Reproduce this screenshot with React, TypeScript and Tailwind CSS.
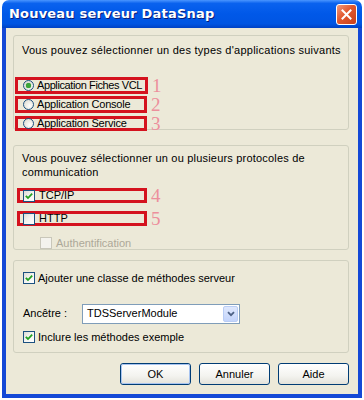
import React from "react";

function Radio({ checked }: { checked?: boolean }) {
  return (
    <span className="w-[11px] h-[11px] shrink-0 rounded-full border border-[#1c5180] bg-[radial-gradient(circle_at_65%_65%,#ffffff_0%,#f0efe8_40%,#d6d5cc_100%)] flex items-center justify-center">
      {checked && <span className="w-[5px] h-[5px] rounded-full bg-[#3aa63a] shadow-[0_0_1px_#1f7f1f]" />}
    </span>
  );
}

function Check({ checked, disabled }: { checked?: boolean; disabled?: boolean }) {
  return (
    <span
      className={
        disabled
          ? "w-[12px] h-[12px] shrink-0 border border-[#c9c7ba] bg-[#f4f3ee] flex items-center justify-center"
          : "w-[12px] h-[12px] shrink-0 border border-[#1c5180] bg-[linear-gradient(135deg,#dcdcd7_0%,#f4f4f1_50%,#ffffff_100%)] flex items-center justify-center"
      }
    >
      {checked && (
        <svg width="8" height="8" viewBox="0 0 8 8">
          <path d="M0.8 3.8 L3 6 L7.2 1.6" stroke="#21a121" strokeWidth="1.8" fill="none" />
        </svg>
      )}
    </span>
  );
}

function Num({ n }: { n: string }) {
  return (
    <span className="ml-[4px] text-[19px] leading-[17px] text-[#ec8f9c] font-['Liberation_Serif',serif]">{n}</span>
  );
}

function Button({ label, def }: { label: string; def?: boolean }) {
  return (
    <div className="w-[71px] h-[22px] rounded-[3px] border border-[#003c74] bg-[linear-gradient(to_bottom,#ffffff_0%,#f3f3ef_60%,#e3e2da_100%)] flex items-center justify-center">
      <div
        className={
          def
            ? "w-full h-full rounded-[2px] border border-[#a8c4f0] flex items-center justify-center"
            : "w-full h-full rounded-[2px] flex items-center justify-center"
        }
      >
        {label}
      </div>
    </div>
  );
}

export default function App() {
  return (
    <div className="w-[364px] h-[400px] bg-white font-['Liberation_Sans',Arial,sans-serif] text-[11px] text-black whitespace-nowrap">
      <div className="ml-[2px] w-[360px] flex flex-col">
        <div className="h-[28px] rounded-t-[7px] bg-[linear-gradient(to_bottom,#4a95ff_0%,#0a62ee_12%,#0058e8_50%,#0055e2_85%,#0042c4_100%)] flex items-center justify-between pl-[7px] pr-[5px]">
          <span className="text-white font-bold text-[13px] tracking-[0.2px] font-['DejaVu_Sans',sans-serif] [text-shadow:1px_1px_0_#0a1e7a]">
            Nouveau serveur DataSnap
          </span>
          <div className="w-[21px] h-[21px] rounded-[3px] border border-white bg-[linear-gradient(135deg,#f09a7e_0%,#e2582e_45%,#c8401a_100%)] flex items-center justify-center">
            <svg width="11" height="11" viewBox="0 0 11 11">
              <path d="M1.5 1.5 L9.5 9.5 M9.5 1.5 L1.5 9.5" stroke="white" strokeWidth="2" strokeLinecap="square" />
            </svg>
          </div>
        </div>
        <div className="h-[370px] border-x-[4px] border-b-[4px] border-[#1448d6] bg-[#ece9d8] pl-[7px] pr-[9px] flex flex-col">
          {/* Group 1 */}
          <div className="mt-[7px] h-[95px] rounded-[3px] border border-[#d0d0bf] flex flex-col">
            <div className="pl-[8px] pt-[8px] leading-[13px] tracking-[0.25px]">Vous pouvez sélectionner un des types d'applications suivants</div>
            <div className="mt-[20px] ml-[1px] flex flex-col gap-[2px] leading-[11px] tracking-[-0.2px]">
              <div className="flex items-center">
                <div className="w-[133px] h-[17px] border-[3px] border-[#d4121e] flex items-center pl-[5px] gap-[3px]">
                  <Radio checked />
                  <span className="tracking-[-0.4px]">Application Fiches VCL</span>
                </div>
                <Num n="1" />
              </div>
              <div className="flex items-center">
                <div className="w-[132px] h-[17px] border-[3px] border-[#d4121e] flex items-center pl-[5px] gap-[3px]">
                  <Radio />
                  <span>Application Console</span>
                </div>
                <Num n="2" />
              </div>
              <div className="flex items-center">
                <div className="w-[132px] h-[15px] border-[3px] border-[#d4121e] flex items-center pl-[5px] gap-[3px]">
                  <Radio />
                  <span>Application Service</span>
                </div>
                <Num n="3" />
              </div>
            </div>
          </div>
          {/* Group 2 */}
          <div className="mt-[15px] h-[105px] rounded-[3px] border border-[#d0d0bf] flex flex-col">
            <div className="pl-[8px] pt-[5px] leading-[14px] tracking-[0.2px]">
              Vous pouvez sélectionner un ou plusieurs protocoles de
              <br />
              communication
            </div>
            <div className="mt-[8px] ml-[3px] flex flex-col gap-[6px] leading-[11px]">
              <div className="flex items-center">
                <div className="w-[130px] h-[15px] border-[3px] border-[#d4121e] flex items-center pl-[3px] gap-[4px]">
                  <Check checked />
                  <span>TCP/IP</span>
                </div>
                <Num n="4" />
              </div>
              <div className="flex items-center">
                <div className="w-[130px] h-[15px] border-[3px] border-[#d4121e] flex items-center pl-[3px] gap-[4px]">
                  <Check />
                  <span>HTTP</span>
                </div>
                <Num n="5" />
              </div>
            </div>
            <div className="mt-[8px] ml-[26px] flex items-center gap-[4px] text-[#aca899]">
              <Check disabled />
              <span>Authentification</span>
            </div>
          </div>
          {/* Group 3 */}
          <div className="mt-[10px] h-[93px] rounded-[3px] border border-[#d0d0bf] flex flex-col pl-[9px]">
            <div className="mt-[9px] flex items-center gap-[3px]">
              <Check checked />
              <span>Ajouter une classe de méthodes serveur</span>
            </div>
            <div className="mt-[17px] flex items-center">
              <span className="w-[59px]">Ancêtre :</span>
              <div className="w-[158px] h-[20px] border border-[#7f9db9] bg-white flex items-center justify-between pl-[4px] pr-[1px]">
                <span>TDSServerModule</span>
                <div className="w-[15px] h-[16px] rounded-[2px] border border-[#b9cdf5] bg-[linear-gradient(to_bottom,#dfe8fd_0%,#c3d4fb_100%)] flex items-center justify-center">
                  <svg width="8" height="6" viewBox="0 0 8 6">
                    <path d="M1 1.2 L4 4.2 L7 1.2" stroke="#4d6185" strokeWidth="1.8" fill="none" />
                  </svg>
                </div>
              </div>
            </div>
            <div className="mt-[5px] flex items-center gap-[3px]">
              <Check checked />
              <span>Inclure les méthodes exemple</span>
            </div>
          </div>
          {/* Buttons */}
          <div className="mt-[10px] flex justify-end gap-[8px] pr-0">
            <Button label="OK" def />
            <Button label="Annuler" />
            <Button label="Aide" />
          </div>
        </div>
      </div>
    </div>
  );
}
